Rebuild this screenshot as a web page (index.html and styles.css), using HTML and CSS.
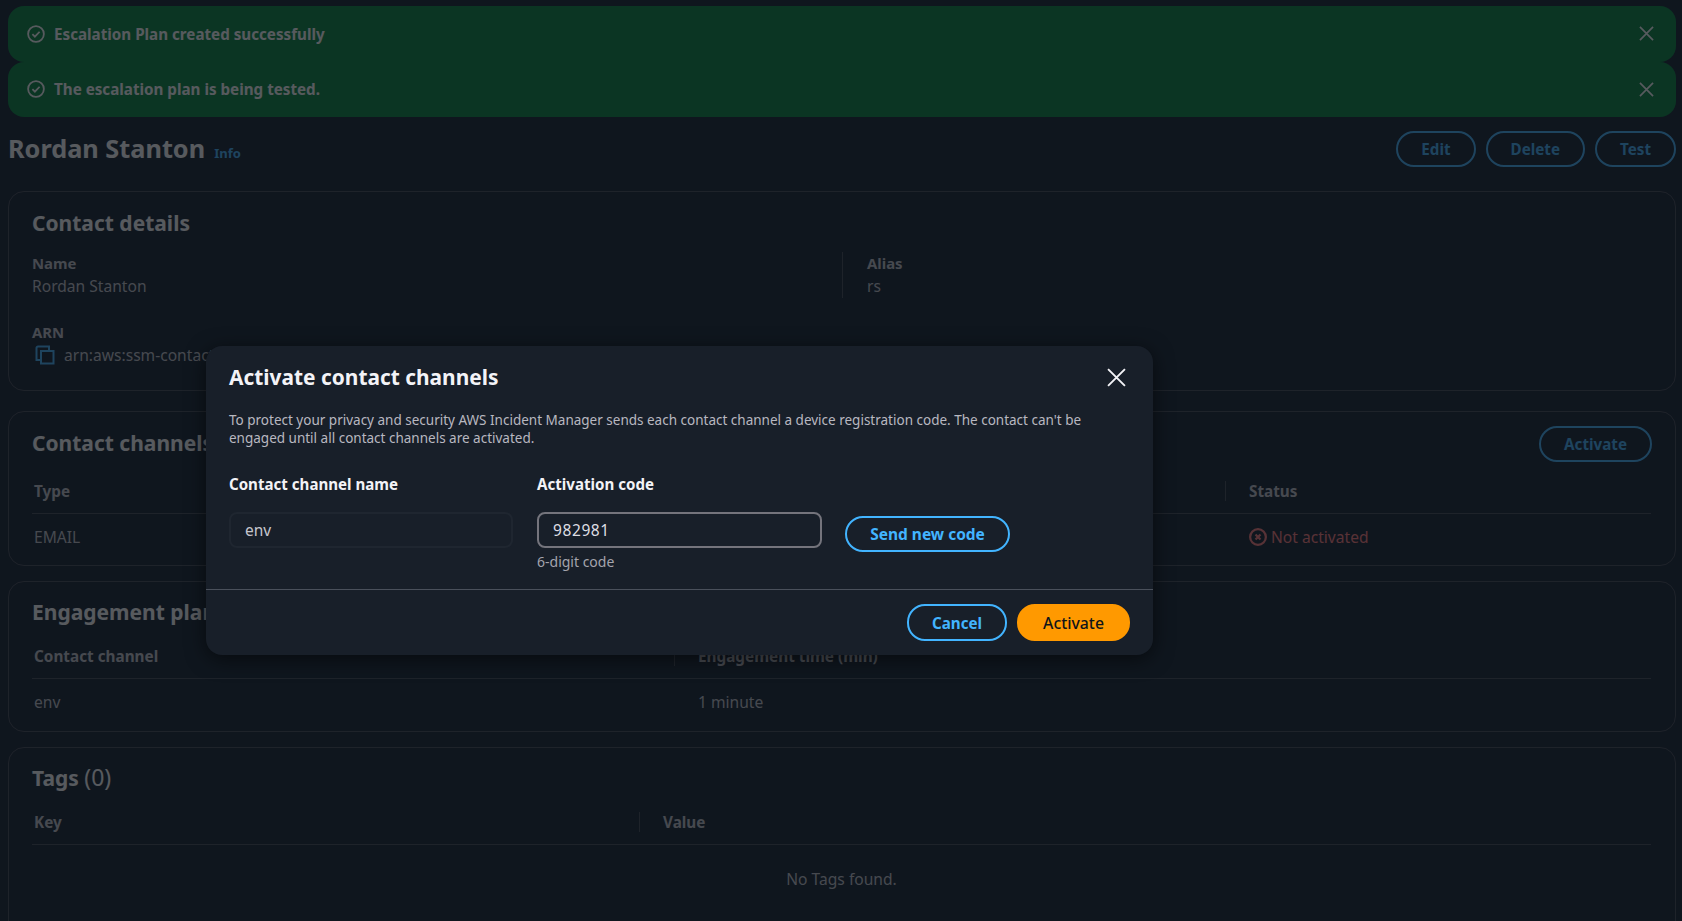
FILE: index.html
```html
<!DOCTYPE html>
<html>

<head>
  <meta name="viewport" content="width=device-width,initial-scale=1.0">
  <meta charset="utf-8">
  <title>Rordan Stanton</title>
  <link rel="stylesheet" href="styles.css">
</head>

<body>
  <div class="flash">
    <svg class="flash-icon" viewBox="0 0 16 16"><circle cx="8" cy="8" r="7"/><path d="M4.8 8.2l2.2 2.2 4.2-4.4"/></svg>
    <span class="flash-text">Escalation Plan created successfully</span>
    <svg class="flash-close" viewBox="0 0 16 16"><path d="M1 1l14 14M15 1L1 15"/></svg>
  </div>
  <div class="flash">
    <svg class="flash-icon" viewBox="0 0 16 16"><circle cx="8" cy="8" r="7"/><path d="M4.8 8.2l2.2 2.2 4.2-4.4"/></svg>
    <span class="flash-text">The escalation plan is being tested.</span>
    <svg class="flash-close" viewBox="0 0 16 16"><path d="M1 1l14 14M15 1L1 15"/></svg>
  </div>

  <div class="page-head">
    <h1>Rordan Stanton</h1>
    <a class="info">Info</a>
    <div class="actions">
      <button class="btn">Edit</button>
      <button class="btn">Delete</button>
      <button class="btn">Test</button>
    </div>
  </div>

  <div class="card card-details">
    <h2>Contact details</h2>
    <div class="details">
      <div>
        <div class="key">Name</div>
        <div class="val">Rordan Stanton</div>
      </div>
      <div class="alias">
        <div class="key">Alias</div>
        <div class="val">rs</div>
      </div>
    </div>
    <div class="key arn-key">ARN</div>
    <div class="val arn">
      <svg class="copy" viewBox="0 0 20 20"><path d="M5 15H1.5V3a1.5 1.5 0 0 1 1.5-1.5h11V5"/><rect x="6" y="6" width="12.5" height="12.5"/></svg>
      arn:aws:ssm-contacts
    </div>
  </div>

  <div class="card card-channels">
    <div class="card-head">
      <h2>Contact channels</h2>
      <button class="btn">Activate</button>
    </div>
    <div class="table-row head cols-channels">
      <div>Type</div>
      <div class="sep">Status</div>
    </div>
    <div class="table-row cols-channels">
      <div>EMAIL</div>
      <div class="status">
        <svg viewBox="0 0 16 16"><circle cx="8" cy="8" r="7"/><path d="M5.8 5.8l4.4 4.4M10.2 5.8l-4.4 4.4"/></svg>
        Not activated
      </div>
    </div>
  </div>

  <div class="card card-plan">
    <h2>Engagement plan</h2>
    <div class="table-row head cols-plan">
      <div>Contact channel</div>
      <div class="sep">Engagement time (min)</div>
    </div>
    <div class="table-row cols-plan">
      <div>env</div>
      <div>1 minute</div>
    </div>
  </div>

  <div class="card card-tags">
    <h2>Tags <span class="count">(0)</span></h2>
    <div class="table-row head cols-tags">
      <div>Key</div>
      <div class="sep">Value</div>
    </div>
    <div class="empty">No Tags found.</div>
  </div>

  <!-- modal over the page -->
  <div class="overlay">
    <div class="modal">
      <div class="modal-head">
        <h3>Activate contact channels</h3>
        <svg class="modal-close" viewBox="0 0 18 18"><path d="M1 1l16 16M17 1L1 17"/></svg>
      </div>
      <p class="modal-desc">To protect your privacy and security AWS Incident Manager sends each contact channel a device registration code. The contact can't be engaged until all contact channels are activated.</p>
      <div class="fields">
        <div class="field-name">
          <label>Contact channel name</label>
          <div class="input input-off">env</div>
        </div>
        <div class="field-code">
          <label>Activation code</label>
          <div class="input input-code">982981</div>
          <div class="hint">6-digit code</div>
        </div>
        <button class="btn btn-send">Send new code</button>
      </div>
      <div class="modal-foot">
        <button class="btn btn-cancel">Cancel</button>
        <button class="btn btn-primary">Activate</button>
      </div>
    </div>
  </div>
</body>

</html>
```

FILE: styles.css
```css
* {
  box-sizing: border-box;
}

html,
body {
  height: 921px;
  overflow: hidden;
}

body {
  margin: 0;
  padding: 6px 6px 0 8px;
  background-color: #0f1b2a;
  color: #c6c6cd;
  font-family: "Noto Sans", "Liberation Sans", sans-serif;
  font-size: 15.6px;
  line-height: 20px;
}

h1,
h2,
h3,
p {
  margin: 0;
}

/* flash bars */
.flash {
  display: flex;
  align-items: center;
  height: 55.5px;
  background-color: #02823a;
  border-radius: 16px;
  padding: 0 22px 0 19px;
  color: #fff;
}

.flash-text {
  font-weight: 700;
  font-size: 15.2px;
  margin-left: 9px;
}

.flash-icon {
  width: 18px;
  height: 18px;
  fill: none;
  stroke: #fff;
  stroke-width: 1.6;
}

.flash-close {
  width: 15px;
  height: 15px;
  margin-left: auto;
  fill: none;
  stroke: #fff;
  stroke-width: 1.8;
}

/* page title */
.page-head {
  display: flex;
  align-items: center;
  height: 36px;
  margin-top: 14px;
}

h1 {
  font-size: 25.3px;
  line-height: 36px;
  margin-bottom: 2px;
  color: #fff;
}

.info {
  color: #42b4ff;
  font-size: 13px;
  font-weight: 700;
  margin: 8px 0 0 9px;
}

.actions {
  display: flex;
  gap: 10px;
  margin-left: auto;
}

.btn {
  height: 36px;
  padding: 0 23px;
  background: none;
  border: 2px solid #42b4ff;
  border-radius: 18px;
  color: #42b4ff;
  font-family: inherit;
  font-size: 15.2px;
  font-weight: 700;
}

/* cards */
.card {
  margin-top: 20px;
  padding: 0 24px 0 23px;
  border: 1px solid #424650;
  border-radius: 16px;
}

.card h2 {
  font-size: 21px;
  line-height: 30px;
  color: #fff;
}

.card-details {
  height: 200px;
  margin-top: 24px;
  padding-top: 16px;
}

.details {
  display: grid;
  grid-template-columns: 810px 1fr;
  margin-top: 14px;
}

.alias {
  border-left: 1px solid #424650;
  padding-left: 24px;
}

.key {
  font-size: 14.9px;
  font-weight: 700;
  line-height: 22px;
}

.val {
  line-height: 24px;
}

.arn-key {
  margin-top: 23px;
}

.arn {
  display: flex;
  align-items: center;
  gap: 9px;
}

.copy {
  width: 20px;
  height: 20px;
  margin-left: 3px;
  fill: none;
  stroke: #42b4ff;
  stroke-width: 2;
}

.card-channels {
  height: 155px;
  padding-top: 14px;
}

.card-head {
  display: flex;
  align-items: center;
  justify-content: space-between;
  margin-right: -1px;
}

.card-head h2 {
  margin-bottom: 2px;
}

.card-plan {
  height: 151px;
  margin-top: 15px;
  padding-top: 15px;
}

.card-tags {
  height: 200px;
  margin-top: 15px;
  padding-top: 15px;
}

.count {
  font-size: 23px;
  font-weight: 400;
  line-height: 1;
}

/* tables */
.table-row {
  display: grid;
  align-items: center;
  padding: 0 2px;
}

.table-row.head {
  height: 45px;
  margin-top: 7px;
  border-bottom: 1px solid #424650;
  font-size: 15.3px;
  font-weight: 700;
}

.table-row:not(.head) {
  height: 45px;
}

.sep {
  position: relative;
}

.sep::before {
  content: "";
  position: absolute;
  left: -24px;
  top: 0;
  height: 20px;
  border-left: 1px solid #424650;
}

.cols-channels {
  grid-template-columns: 1215px 1fr;
}

.cols-plan {
  grid-template-columns: 664px 1fr;
}

.cols-tags {
  grid-template-columns: 629px 1fr;
}

.status {
  display: flex;
  align-items: center;
  gap: 4px;
  color: #ff7a7a;
}

.status svg {
  width: 18px;
  height: 18px;
  fill: none;
  stroke: #ff7a7a;
  stroke-width: 2;
}

.empty {
  text-align: center;
  margin-top: 24px;
}

/* modal */
.overlay {
  position: absolute;
  top: 0;
  left: 0;
  width: 100%;
  height: 100%;
  padding: 346px 0 0 206px;
  background-color: rgba(15, 20, 26, 0.7);
}

.modal {
  width: 947px;
  height: 309px;
  background-color: #181f29;
  border-radius: 16px;
  box-shadow: 0 4px 20px rgba(0, 0, 0, 0.55);
}

.modal-head {
  display: flex;
  align-items: center;
  justify-content: space-between;
  height: 62px;
  padding: 0 27px 0 23px;
}

h3 {
  font-size: 20.9px;
  color: #f3f3f7;
}

.modal-close {
  width: 19px;
  height: 19px;
  fill: none;
  stroke: #f3f3f7;
  stroke-width: 1.8;
}

.modal-desc {
  padding: 0 60px 0 23px;
  margin-top: 3px;
  font-size: 13.5px;
  line-height: 18px;
  color: #b8b8c0;
}

.fields {
  display: grid;
  grid-template-columns: 284px 285px auto;
  column-gap: 24px;
  align-items: start;
  justify-content: start;
  height: 115px;
  padding: 0 23px;
  margin-top: 27px;
}

.fields label {
  display: block;
  height: 38px;
  font-size: 15.1px;
  font-weight: 700;
  line-height: 20px;
  color: #f3f3f7;
}

.input {
  height: 36px;
  padding: 0 14px;
  border: 2px solid #74747c;
  border-radius: 8px;
  font-size: 15.5px;
  line-height: 32px;
  color: #dedee3;
}

.input-code {
  letter-spacing: 0.6px;
}

.input-off {
  border-color: #1f2630;
  color: #c6c6cd;
}

.hint {
  margin-top: 4px;
  font-size: 14px;
  line-height: 20px;
  color: #a4a4ad;
}

.btn-send {
  width: 165px;
  height: 36px;
  margin: 42px 0 0 -1px;
  padding: 0;
  font-size: 15.5px;
}

.modal-foot {
  display: flex;
  justify-content: flex-end;
  gap: 10px;
  height: 66px;
  padding: 14px 23px 0 0;
  border-top: 1px solid #4a505b;
}

.btn-cancel {
  width: 100px;
  height: 37px;
  padding: 0;
}

.btn-primary {
  width: 113px;
  height: 37px;
  padding: 0;
  background-color: #ff9900;
  border-color: #ff9900;
  color: #0f141a;
  font-size: 15.8px;
  font-weight: 500;
}
```
